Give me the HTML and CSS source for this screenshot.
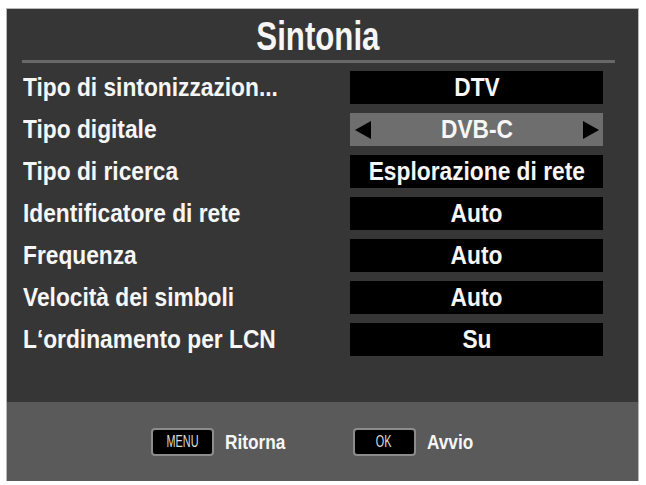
FILE: index.html
```html
<!DOCTYPE html>
<html lang="it">
<head>
<meta charset="utf-8">
<title>Sintonia</title>
<link rel="stylesheet" href="styles.css">
</head>
<body>
<div class="screen">
  <div class="title"><span class="title-text">Sintonia</span></div>
  <div class="divider"></div>
  <div class="rows">
    <div class="row"><span class="label">Tipo di sintonizzazion...</span><span class="value"><span class="vtext">DTV</span></span></div>
    <div class="row"><span class="label">Tipo digitale</span><span class="value selected"><svg class="arrow" viewBox="0 0 16 18"><polygon points="16,0 16,18 0,9"/></svg><span class="vtext">DVB-C</span><svg class="arrow" viewBox="0 0 16 18"><polygon points="0,0 0,18 16,9"/></svg></span></div>
    <div class="row"><span class="label">Tipo di ricerca</span><span class="value"><span class="vtext">Esplorazione di rete</span></span></div>
    <div class="row"><span class="label">Identificatore di rete</span><span class="value"><span class="vtext">Auto</span></span></div>
    <div class="row"><span class="label">Frequenza</span><span class="value"><span class="vtext">Auto</span></span></div>
    <div class="row"><span class="label">Velocità dei simboli</span><span class="value"><span class="vtext">Auto</span></span></div>
    <div class="row"><span class="label">L‘ordinamento per LCN</span><span class="value"><span class="vtext">Su</span></span></div>
  </div>
  <div class="footer">
    <span class="key"><span class="key-text">MENU</span></span><span class="hint">Ritorna</span>
    <span class="key key-ok"><span class="key-text">OK</span></span><span class="hint">Avvio</span>
  </div>
</div>
</body>
</html>
```

FILE: styles.css
```css
html, body {
  margin: 0;
  padding: 0;
  background: #ffffff;
}

.screen {
  margin: 9px 0 0 7px;
  width: 631px;
  height: 472px;
  background: #363636;
  box-shadow: 0 0 0 1px #b8b8b8;
  display: flex;
  flex-direction: column;
  font-family: "Liberation Sans", Arial, sans-serif;
  color: #f6f6f6;
}

.title {
  font-weight: bold;
  font-size: 40px;
  line-height: 42px;
  height: 42px;
  padding-top: 6px;
  padding-right: 10px;
  text-align: center;
}

.title-text {
  display: inline-block;
  transform: scaleX(0.78);
}

.divider {
  height: 3px;
  margin: 3px 23px 0 15px;
  background: #686868;
}

.rows {
  margin-top: 8px;
  display: flex;
  flex-direction: column;
  gap: 9px;
}

.row {
  display: flex;
  align-items: center;
  height: 33px;
  padding-left: 16px;
}

.label {
  width: 327px;
  font-weight: bold;
  font-size: 25px;
  white-space: nowrap;
  transform: scaleX(0.91);
  transform-origin: left center;
}

.value {
  width: 253px;
  height: 33px;
  background: #000000;
  display: flex;
  align-items: center;
  justify-content: center;
  font-weight: bold;
  font-size: 25px;
  white-space: nowrap;
}

.vtext {
  display: inline-block;
  transform: scaleX(0.91);
}

.value.selected {
  background: #6e6e6e;
  justify-content: space-between;
  padding: 0 4px 0 5px;
  box-sizing: border-box;
}

.value.selected .vtext {
  flex: 1;
  text-align: center;
}

.arrow {
  width: 16px;
  height: 18px;
  fill: #000000;
}

.footer {
  margin-top: auto;
  height: 79px;
  background: #5a5a5a;
  display: flex;
  align-items: center;
  padding-left: 144px;
}

.key {
  width: 59px;
  height: 24px;
  background: #000000;
  border: 2px solid #8c8c8c;
  border-radius: 4px;
  display: flex;
  align-items: center;
  justify-content: center;
  font-size: 16px;
  color: #dcdcdc;
}

.key-text {
  display: inline-block;
  transform: scaleX(0.68);
}

.key-ok {
  margin-left: 54px;
}

.hint {
  display: inline-block;
  margin-left: 11px;
  font-weight: bold;
  font-size: 21px;
  color: #f6f6f6;
  transform: scaleX(0.82);
  transform-origin: left center;
}
```
